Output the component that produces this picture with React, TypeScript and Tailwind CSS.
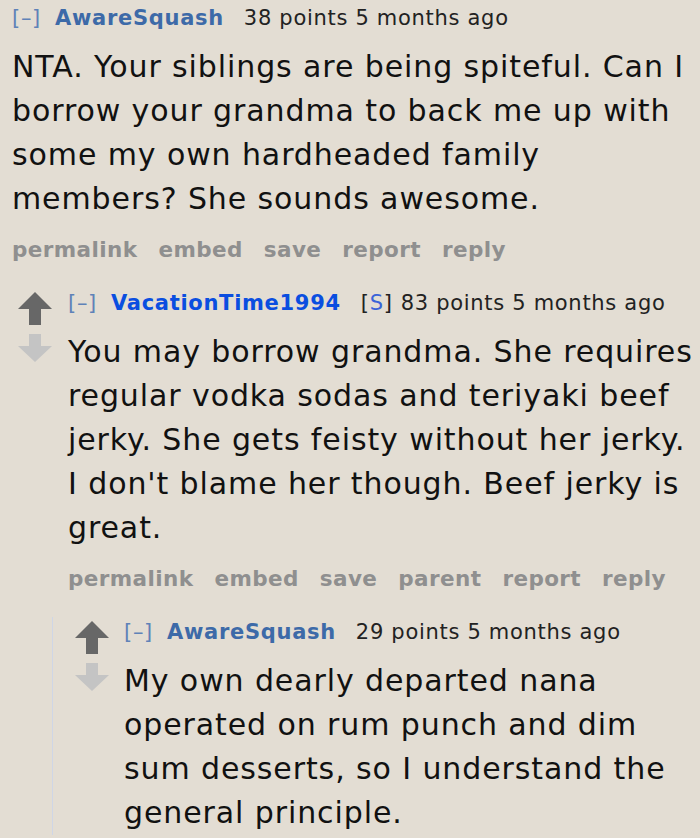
import React from 'react';

function Arrows() {
  return (
    <div className="flex flex-col items-center w-[34px] shrink-0 pt-[4px] gap-[9px]">
      <svg width="34" height="33" viewBox="0 0 34 33">
        <path d="M17 0 L34 17 L23 17 L23 33 L11 33 L11 17 L0 17 Z" fill="#676767" />
      </svg>
      <svg width="34" height="28" viewBox="0 0 34 28">
        <path d="M11 0 L23 0 L23 12 L34 12 L17 28 L0 12 L11 12 Z" fill="#c4c4c4" />
      </svg>
    </div>
  );
}

function Actions({ items }: { items: string[] }) {
  return (
    <div className="flex gap-[21px] text-[21.5px] tracking-[0.4px] font-bold text-[#8f8f8f] leading-[30px] mt-[14px]">
      {items.map((a) => (
        <span key={a}>{a}</span>
      ))}
    </div>
  );
}

function Header({ user, points, op }: { user: string; points: number; op?: boolean }) {
  return (
    <div className="flex items-baseline text-[21px] tracking-[0.7px] leading-[30px] text-[#222]">
      <span className="text-[#5f82b8] mr-[14px]">[–]</span>
      <span className={`font-bold mr-[20px] ${op ? 'text-[#0a4ee0]' : 'text-[#3d6aa8]'}`}>{user}</span>
      {op && (
        <span className="mr-[8px]">
          [<span className="text-[#3a63d8]">S</span>]
        </span>
      )}
      <span>{points} points 5 months ago</span>
    </div>
  );
}

const body = 'text-[30px] tracking-[0.9px] leading-[44px] text-[#111] mt-[12px]';

export default function App() {
  return (
    <div className="min-h-screen bg-[#e3ddd3] font-[family-name:'DejaVu_Sans',sans-serif] overflow-hidden pl-[12px] pt-[3px]">
      {/* top comment */}
      <Header user="AwareSquash" points={38} />
      <p className={body}>
        NTA. Your siblings are being spiteful. Can I<br />
        borrow your grandma to back me up with<br />
        some my own hardheaded family<br />
        members? She sounds awesome.
      </p>
      <Actions items={['permalink', 'embed', 'save', 'report', 'reply']} />

      {/* child */}
      <div className="flex gap-[16px] ml-[6px] mt-[23px]">
        <Arrows />
        <div className="flex-1">
          <Header user="VacationTime1994" points={83} op />
          <p className={body}>
            You may borrow grandma. She requires<br />
            regular vodka sodas and teriyaki beef<br />
            jerky. She gets feisty without her jerky.<br />
            I don't blame her though. Beef jerky is<br />
            great.
          </p>
          <Actions items={['permalink', 'embed', 'save', 'parent', 'report', 'reply']} />

          {/* grandchild */}
          <div className="border-l border-[#cfd6e6] -ml-[16px] pl-[22px] mt-[23px] flex gap-[15px]">
            <Arrows />
            <div className="flex-1">
              <Header user="AwareSquash" points={29} />
              <p className={body}>
                My own dearly departed nana<br />
                operated on rum punch and dim<br />
                sum desserts, so I understand the<br />
                general principle.
              </p>
            </div>
          </div>
        </div>
      </div>
    </div>
  );
}
